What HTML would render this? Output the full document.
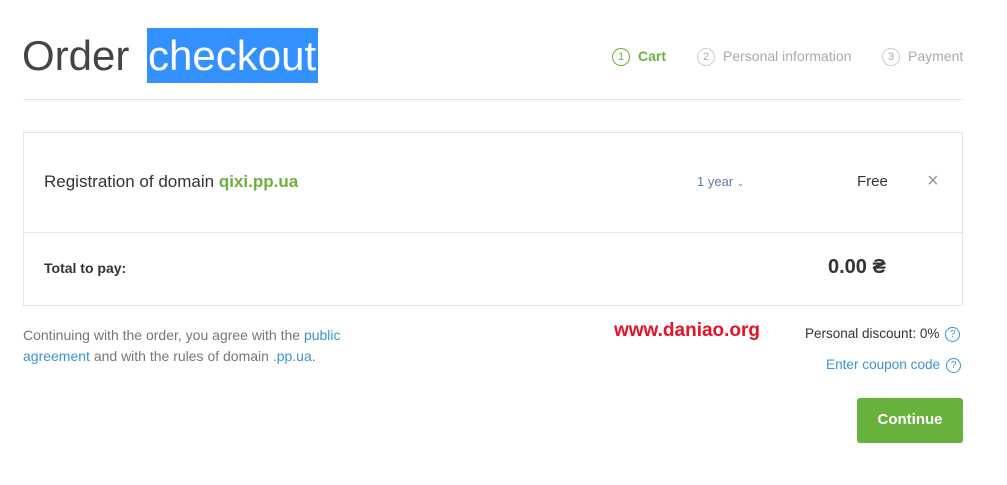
<!DOCTYPE html>
<html><head><style>
body{margin:0;width:1007px;height:485px;background:#fff;font-family:"Liberation Sans",sans-serif;position:relative;overflow:hidden;color:#333}
.a{position:absolute;white-space:nowrap}
.c{display:inline-block;width:16px;height:16px;border:1px solid #ccc;border-radius:50%;font-size:11px;text-align:center;line-height:16px;color:#aaa;margin-right:8px;vertical-align:middle}
.q{display:inline-block;width:13px;height:13px;border:1px solid #3a95d0;border-radius:50%;font-size:10px;text-align:center;line-height:13px;color:#3a95d0;margin-left:6px;vertical-align:middle}
</style></head><body>
<div class="a" style="left:22px;top:28px;font-size:42px;color:#444;line-height:55px">Order <span style="background:#3390ff;color:#fff;padding:0 2px 0 1px;display:inline-block;margin-left:6px">checkout</span></div>
<div class="a" style="left:612px;top:48px;font-size:14px;color:#6ab23e;font-weight:bold"><span class="c" style="border-color:#6ab23e;color:#6ab23e;font-weight:normal">1</span>Cart</div>
<div class="a" style="left:697px;top:48px;font-size:14px;color:#aaa"><span class="c">2</span>Personal information</div>
<div class="a" style="left:882px;top:48px;font-size:14px;color:#aaa"><span class="c">3</span>Payment</div>
<div class="a" style="left:23px;top:99px;width:940px;height:1px;background:#e5e5e5"></div>
<div class="a" style="left:23px;top:132px;width:938px;height:172px;border:1px solid #e5e5e5"></div>
<div class="a" style="left:24px;top:232px;width:938px;height:1px;background:#e5e5e5"></div>
<div class="a" style="left:44px;top:172px;font-size:17px;color:#333">Registration of domain <b style="color:#6ab23e">qixi.pp.ua</b></div>
<div class="a" style="left:697px;top:174px;font-size:13px;color:#5a7aa8">1 year <span style="font-size:9px">⌄</span></div>
<div class="a" style="left:857px;top:173px;font-size:15px;color:#333">Free</div>
<div class="a" style="left:927px;top:170px;font-size:20px;color:#999">×</div>
<div class="a" style="left:44px;top:260px;font-size:14px;font-weight:bold;color:#333">Total to pay:</div>
<div class="a" style="left:828px;top:256px;font-size:20px;font-weight:bold;color:#333">0.00 ₴</div>
<div class="a" style="left:23px;top:325px;font-size:14px;color:#777;line-height:21px">Continuing with the order, you agree with the <span style="color:#3a95d0">public</span><br><span style="color:#3a95d0">agreement</span> and with the rules of domain <span style="color:#3a95d0">.pp.ua</span>.</div>
<div class="a" style="left:614px;top:320px;font-size:19px;font-weight:bold;color:#e8102a">www.daniao.org</div>
<div class="a" style="left:805px;top:326px;font-size:13.5px;color:#333">Personal discount: 0%<span class="q">?</span></div>
<div class="a" style="left:826px;top:357px;font-size:13.6px;color:#3a95d0">Enter coupon code<span class="q">?</span></div>
<div class="a" style="left:857px;top:398px;width:106px;height:45px;background:#67b13c;border-radius:3px;color:#fff;font-weight:bold;font-size:15px;text-align:center;line-height:43px">Continue</div>
</body></html>
